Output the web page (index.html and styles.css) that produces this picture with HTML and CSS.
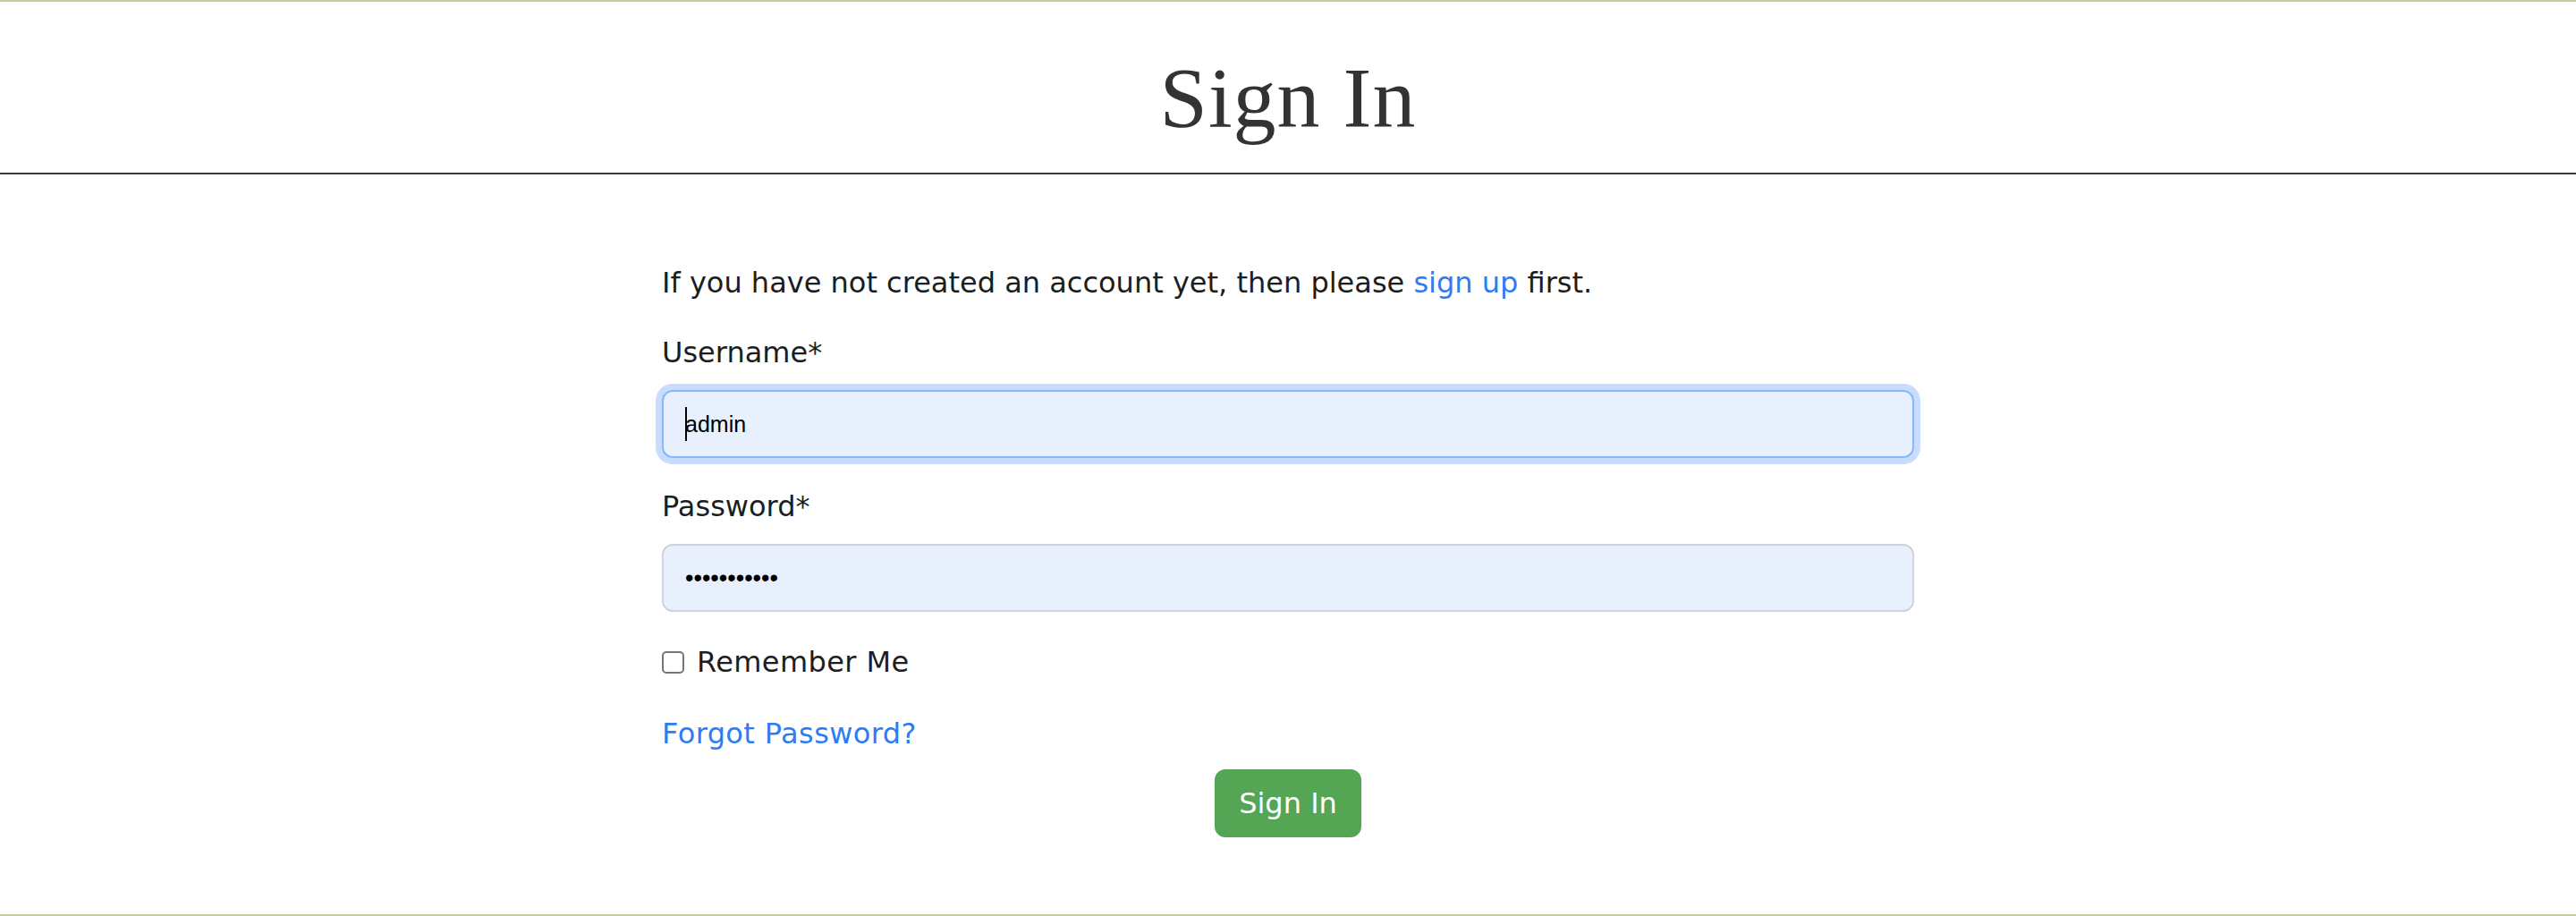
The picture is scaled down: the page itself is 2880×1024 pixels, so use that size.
FILE: index.html
```html
<!DOCTYPE html>
<html lang="en">
<head>
<meta charset="utf-8">
<title>Sign In</title>
<link rel="stylesheet" href="styles.css">
</head>
<body>
<header class="page-header">
  <h1 class="page-title">Sign In</h1>
</header>
<main class="content">
  <form class="login-form">
    <p class="intro">If you have not created an account yet, then please <a class="link" href="#">sign up</a> first.</p>
    <div class="field">
      <label class="field-label" for="id_login">Username*</label>
      <div class="input-wrap">
        <input class="text-input text-input-focused" id="id_login" type="text" value="admin">
        <span class="caret"></span>
      </div>
    </div>
    <div class="field field-last">
      <label class="field-label" for="id_password">Password*</label>
      <input class="text-input password-input" id="id_password" type="password" value="adminadmin1">
    </div>
    <div class="check-row">
      <input class="checkbox" id="id_remember" type="checkbox">
      <label class="check-label" for="id_remember">Remember Me</label>
    </div>
    <div class="forgot"><a class="link" href="#">Forgot Password?</a></div>
    <div class="actions">
      <button class="btn-signin" type="button">Sign In</button>
    </div>
  </form>
</main>
<footer class="page-footer"></footer>
</body>
</html>
```
FILE: styles.css
```css
* {
  box-sizing: border-box;
}

html, body {
  margin: 0;
  padding: 0;
}

body {
  min-height: 100vh;
  display: flex;
  flex-direction: column;
  border-top: 2px solid #c3cd9f;
  background: #ffffff;
  color: #1b1e21;
  font-family: "DejaVu Sans", "Noto Sans", sans-serif;
  font-size: 32px;
  line-height: 48px;
}

.page-header {
  padding: 50px 0 26px;
  border-bottom: 2px solid #343a40;
  text-align: center;
}

.page-title {
  margin: 0;
  font-family: "Liberation Serif", "DejaVu Serif", serif;
  font-weight: 400;
  font-size: 96px;
  line-height: 115px;
  letter-spacing: 1px;
  color: #333333;
}

.content {
  padding-top: 97px;
}

.login-form {
  width: 1400px;
  margin: 0 auto;
}

.intro {
  margin: 0 0 30px;
}

.link {
  color: #2d7cf6;
  text-decoration: none;
}

.field {
  margin-bottom: 30px;
}

.field-last {
  margin-bottom: 32px;
}

.field-label {
  display: block;
  margin-bottom: 18px;
}

.input-wrap {
  position: relative;
}

.text-input {
  display: block;
  width: 100%;
  height: 76px;
  margin: 0;
  padding: 12px 24px;
  border: 2px solid #ced4da;
  border-radius: 12px;
  background: #e8f0fe;
  color: #000000;
  font-family: "Liberation Sans", Arial, sans-serif;
  font-size: 25px;
  line-height: 48px;
  outline: none;
}

.text-input-focused {
  border-color: #86b7fe;
  box-shadow: 0 0 0 7px #c8dcfd;
}

.password-input {
  font-size: 27px;
  letter-spacing: 0;
}

.caret {
  position: absolute;
  left: 26px;
  top: 19px;
  width: 2px;
  height: 38px;
  background: #000000;
}

.check-row {
  display: flex;
  align-items: center;
  gap: 14px;
  margin-bottom: 32px;
}

.checkbox {
  appearance: none;
  -webkit-appearance: none;
  flex: none;
  width: 25px;
  height: 25px;
  margin: 0;
  border: 2px solid #767676;
  border-radius: 5px;
  background: #ffffff;
}

.check-label {
  color: #1b1e21;
  letter-spacing: 0.4px;
}

.forgot {
  margin-bottom: 16px;
  letter-spacing: 0.4px;
}

.actions {
  display: flex;
  justify-content: center;
}

.btn-signin {
  margin: 0;
  padding: 12px 25px;
  border: 2px solid #54a655;
  border-radius: 12px;
  background: #54a655;
  color: #ffffff;
  font-family: "DejaVu Sans", "Noto Sans", sans-serif;
  font-size: 32px;
  line-height: 48px;
  cursor: pointer;
}

.page-footer {
  margin-top: auto;
  border-top: 2px solid #c3cd9f;
}
```
